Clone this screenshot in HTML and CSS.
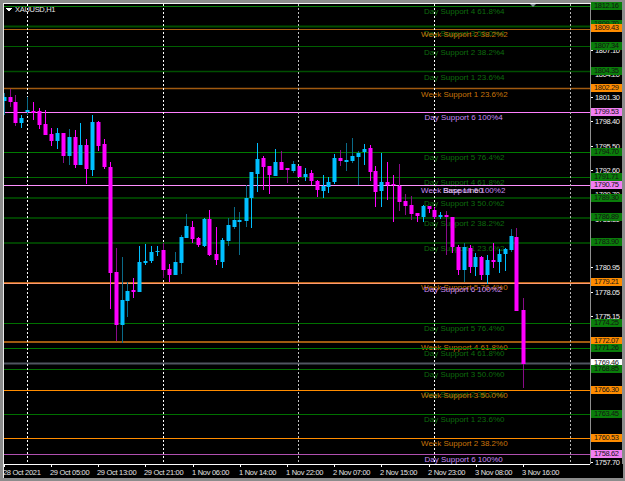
FILE: index.html
```html
<!DOCTYPE html>
<html lang="en">
<head>
  <meta charset="UTF-8" />
  <title>XAUUSD,H1</title>
  <link rel="stylesheet" href="styles.css">
</head>
<body>
  <div class="terminal">
    <div class="chart-window">
      <div class="plot" id="plot">
        <svg class="plot-svg" id="plot-svg" viewBox="4 4 586 460" width="586" height="460"></svg>
        <div class="symbol">
          <svg class="symbol-icon" viewBox="0 0 6 4" width="6" height="4"><path d="M0 0h6v1H0zM1 1h4v1H1zM2 2h2v1H2z" fill="#fff"/></svg>
          <span>XAUUSD,H1</span>
        </div>
        <svg class="one-click" viewBox="0 0 6 3" width="6" height="3"><path d="M0 0h6L3 3z" fill="#8a94a0"/></svg>
      </div>
      <div class="price-axis" id="price-axis"></div>
      <div class="time-axis" id="time-axis"></div>
      <div class="corner"></div>
    </div>
  </div>
  <script src="chart.js"></script>
</body>
</html>
```

FILE: styles.css
```css
* {
  box-sizing: border-box;
}

html, body {
  margin: 0;
  padding: 0;
  background: #8c8c8c;
}

.terminal {
  width: 625px;
  height: 481px;
  padding: 3px;
  overflow: hidden;
  background: #8c8c8c;
}

.chart-window {
  display: grid;
  grid-template-columns: 586px 33px;
  grid-template-rows: 460px 14px;
  border-left: 1px solid #e8e8e8;
  border-top: 1px solid #f4f4f4;
  background: #000;
  font-family: "Liberation Sans", Arial, sans-serif;
}

.plot {
  position: relative;
  overflow: hidden;
  background: #000;
}

.plot-svg {
  position: absolute;
  left: 0;
  top: 0;
  z-index: 2;
}

.symbol {
  position: absolute;
  left: 2px;
  top: 1px;
  z-index: 3;
  display: flex;
  align-items: center;
  gap: 3px;
  color: #e4e4e4;
  font-size: 7.5px;
  letter-spacing: -0.3px;
  line-height: 9px;
}

.one-click {
  position: absolute;
  left: 526px;
  top: 0;
  z-index: 3;
}

.level-label {
  position: absolute;
  z-index: 1;
  font-size: 8px;
  line-height: 9px;
  white-space: nowrap;
}

.level-label.day { color: #0d6b0d; }
.level-label.week { color: #c9750a; }
.level-label.pink { color: #c98cf5; }
.level-label.white { color: #e0c8e8; }

.price-axis {
  position: relative;
  z-index: 4;
  border-left: 1px solid #8f8f8f;
}

.price {
  position: absolute;
  left: 4px;
  color: #f0f0f0;
  font-size: 7.5px;
  letter-spacing: -0.35px;
  line-height: 9px;
}

.price-tick {
  position: absolute;
  left: 0;
  width: 2px;
  height: 1px;
  background: #fff;
}

.tag {
  position: absolute;
  left: 0;
  width: 31px;
  height: 8px;
  padding-left: 3px;
  color: #141414;
  font-size: 7.5px;
  letter-spacing: -0.35px;
  line-height: 8px;
}

.tag.green { background: #0a7d0a; }
.tag.orange { background: #ff8c00; }
.tag.pink { background: #f27ff2; }
.tag.white { background: #fff; }

.time-axis {
  position: relative;
  overflow: hidden;
  border-top: 1px solid #fff;
}

.time {
  position: absolute;
  top: 3px;
  color: #e4e4e4;
  font-size: 7.5px;
  letter-spacing: -0.3px;
  line-height: 9px;
  white-space: nowrap;
}

.time-tick {
  position: absolute;
  top: 0;
  width: 1px;
  height: 2px;
  background: #fff;
}

.corner {
  background: #000;
}
```

FILE: chart.js
```js
// horizontal levels: y, colour, width
const levels = [
  [6.5, '#0a7d0a', 1], [26.5, '#004f00', 2], [29.5, '#a8600f', 1],
  [46.5, '#005f00', 1], [71.5, '#004f00', 1.5], [88.5, '#a05a10', 1.5], [112.5, '#ff80ff', 1],
  [152.5, '#007a00', 1], [177.5, '#006a00', 1], [185.5, '#ff90ff', 1], [198, '#004000', 2],
  [218, '#004000', 2], [243, '#004000', 2], [282.5, '#b8651a', 1], [283.5, '#ff9a70', 1],
  [323.5, '#007000', 1], [342, '#a05a10', 2], [348.5, '#007a00', 1], [363.5, '#4f5560', 2],
  [369.5, '#007000', 1], [390.5, '#ff8c00', 1], [414.5, '#007000', 1], [438.5, '#ff8c00', 1],
  [454.5, '#b050b0', 1]
];

// dashed grid: x, colour
const grid = [[27.5, '#fff'], [163.5, '#fff'], [298.5, '#c0c0c0'], [434.5, '#fff'], [570.5, '#b8b8b8']];

// chart labels: class, x, centre y, text
const labels = [
  ['day', 424, 11, 'Day Support 4 61.8%4'],
  ['day', 424, 33, 'Day Support 3 50.0%4'],
  ['week', 421, 34, 'Week Support 2 38.2%2'],
  ['day', 424, 52, 'Day Support 2 38.2%4'],
  ['day', 424, 77, 'Day Support 1 23.6%4'],
  ['week', 421, 94, 'Week Support 1 23.6%2'],
  ['pink', 424.5, 117.5, 'Day Support 6 100%4'],
  ['day', 424, 157, 'Day Support 5 76.4%2'],
  ['day', 424, 182, 'Day Support 4 61.8%2'],
  ['pink', 421, 190, 'Week Support 6 100%2'],
  ['white', 443, 190, 'Base Line0'],
  ['day', 424, 203, 'Day Support 3 50.0%2'],
  ['day', 424, 223, 'Day Support 2 38.2%2'],
  ['day', 424, 248, 'Day Support 1 23.6%2'],
  ['week', 421, 287, 'Week Support 5 76.4%0'],
  ['pink', 424, 289, 'Day Support 6 100%2'],
  ['day', 424, 328, 'Day Support 5 76.4%0'],
  ['week', 421, 347, 'Week Support 4 61.8%0'],
  ['day', 424, 353, 'Day Support 4 61.8%0'],
  ['day', 424, 374, 'Day Support 3 50.0%0'],
  ['day', 424, 394, 'Day Support 2 38.2%0'],
  ['week', 421, 395, 'Week Support 3 50.0%0'],
  ['day', 424, 419, 'Day Support 1 23.6%0'],
  ['week', 421, 443, 'Week Support 2 38.2%0'],
  ['pink', 424.5, 459.5, 'Day Support 6 100%0']
];

// candles: x, colour (u = cyan, d = magenta), body top, body bottom, wick top, wick bottom, dim wick
const candles = [
  [4.5,'u',97,101,93,115,1], [10,'d',97,102,89,107,1], [15.7,'d',102,123,95,126,1], [21.6,'u',118,123,115,128],
  [27.5,'u',110,112,97,115,1], [33.3,'d',111,113,102,120], [39.2,'d',111,125,108,129], [45,'d',124,135,110,135],
  [51,'d',134,141,128,146], [57,'u',133,141,128,149], [63,'d',133,156,133,163,1], [69,'u',137,156,129,165,1],
  [75,'d',137,165,130,168], [80.5,'u',145,165,123,165], [86,'d',145,169,139,184], [92,'u',122,170,115,176],
  [98,'d',122,146,121,151], [104,'d',144,167,139,169], [110,'d',167,273,162,309], [116,'d',272,325,248,341,1],
  [122,'u',300,325,257,343,1], [127.5,'u',291,301,282,317,1], [133.6,'d',290,292,278,298], [139.7,'u',262,292,246,292],
  [145.7,'u',261,263,244,265], [151,'u',252,261,246,263], [157,'u',251,252,246,256], [163,'d',250,270,243,278,1],
  [169,'d',269,275,264,282], [175,'u',262,275,252,275,1], [181,'u',237,263,235,274,1], [186.5,'u',226,238,214,238,1],
  [192.5,'d',227,239,221,243], [198.7,'d',238,245,237,247], [204.5,'u',219,246,218,247], [209.8,'d',219,255,210,256],
  [216,'d',254,260,227,265], [222,'u',240,262,238,268], [228,'u',225,241,218,246,1], [234,'u',220,227,207,229,1],
  [239.5,'u',220,222,212,255,1], [246,'u',198,221,185,227,1], [251.5,'u',172,198,172,228], [257.5,'u',159,174,143,192],
  [263.5,'d',158,167,156,190], [269.5,'d',166,175,166,194], [275,'u',162,176,149,176], [281,'d',162,170,151,170,1],
  [287,'d',168,170,168,183,1], [293,'u',164,171,161,173,1], [299,'d',166,177,166,177], [305,'u',174,177,168,181],
  [311,'d',173,181,170,185], [317,'d',181,190,180,197], [323,'u',186,191,175,198], [328.5,'u',182,187,177,193],
  [334,'u',158,182,154,184], [340,'d',158,161,150,166,1], [346,'u',160,162,143,171,1], [352,'u',156,161,138,163,1],
  [358,'u',153,157,151,185,1], [364,'u',149,152,144,165], [370,'d',148,172,145,181], [375.5,'d',171,192,166,207],
  [381.5,'u',182,191,153,207], [387.5,'d',182,185,162,200], [393,'d',184,185,175,222], [399,'d',186,202,164,211,1],
  [405,'d',201,206,194,215,1], [411,'d',205,214,196,220,1], [417,'d',213,216,213,222], [423,'u',206,217,205,222],
  [429,'d',206,209,206,213], [434.5,'d',210,217,207,219], [440,'u',215,217,212,219], [446,'d',215,217,211,255,1],
  [452,'d',217,247,217,253], [458,'d',247,270,245,275], [464,'u',247,270,243,282,1], [470,'d',248,267,245,273],
  [475.7,'u',257,267,253,276], [481.7,'d',257,275,256,280], [487.5,'u',260,275,255,284], [493,'d',260,262,243,268],
  [499,'u',254,262,249,273], [505,'u',249,254,248,271], [511,'u',236,250,229,252,1], [516.5,'d',237,311,228,311,1],
  [523,'d',310,364,298,388,1]
];

// price axis: plain scale values, then the coloured tags on top
const prices = [
  [1810.00,24], [1807.10,50], [1804.20,74], [1801.30,97], [1798.40,121], [1795.50,146], [1792.60,170], [1789.70,194],
  [1786.80,219], [1783.90,243], [1780.95,267], [1778.05,292], [1775.15,316], [1772.25,340], [1769.35,365],
  [1766.45,389], [1763.55,414], [1760.65,438], [1757.70,462]
];
const tags = [
  ['green',1812.16,6], ['green',1809.70,24], ['orange',1809.43,28], ['green',1807.34,46], ['green',1804.35,71], ['orange',1802.29,88],
  ['pink',1799.53,112], ['green',1794.70,152], ['green',1791.71,177], ['pink',1790.75,185], ['green',1789.30,198],
  ['green',1786.89,217], ['green',1783.90,242], ['orange',1779.21,282], ['green',1774.25,323], ['orange',1772.07,341],
  ['green',1771.26,348], ['white',1769.46,363], ['green',1768.85,369], ['orange',1766.30,390], ['green',1763.45,414],
  ['orange',1760.53,438], ['pink',1758.62,454]
];

const times = [
  [3,'28 Oct 2021'], [50,'29 Oct 05:00'], [97,'29 Oct 13:00'], [144,'29 Oct 21:00'], [192,'1 Nov 06:00'], [239,'1 Nov 14:00'],
  [286,'1 Nov 22:00'], [333,'2 Nov 07:00'], [380,'2 Nov 15:00'], [428,'2 Nov 23:00'], [475,'3 Nov 08:00'], [522,'3 Nov 16:00']
];

const NS = 'http://www.w3.org/2000/svg';
const plot = document.getElementById('plot');
const svg = document.getElementById('plot-svg');
const priceAxis = document.getElementById('price-axis');
const timeAxis = document.getElementById('time-axis');

function shape(tag, attrs) {
  const el = document.createElementNS(NS, tag);
  Object.keys(attrs).forEach(k => el.setAttribute(k, attrs[k]));
  svg.appendChild(el);
}

function box(parent, cls, left, top, text) {
  const el = document.createElement('div');
  el.className = cls;
  if (left !== null) el.style.left = left + 'px';
  el.style.top = top + 'px';
  if (text) el.textContent = text;
  parent.appendChild(el);
}

levels.forEach(([y, color, w]) => {
  shape('line', { x1: 4, x2: 590, y1: y, y2: y, stroke: color, 'stroke-width': w });
});

grid.forEach(([x, color]) => {
  shape('line', { x1: x, x2: x, y1: 4, y2: 464, stroke: color, 'stroke-dasharray': '2 2' });
});

labels.forEach(([cls, x, y, text]) => {
  box(plot, 'level-label ' + cls, x - 4, y - 8.5, text);
});

candles.forEach(([x, dir, top, bottom, wickTop, wickBottom, dim]) => {
  const color = dir === 'u' ? '#00bfff' : '#ff00ff';
  const wick = !dim ? color : (dir === 'u' ? '#0a6a88' : '#8a0a8a');
  const cx = Math.round(x - 0.5) + 0.5;
  shape('line', { x1: cx, x2: cx, y1: wickTop, y2: wickBottom, stroke: wick });
  shape('rect', { x: cx - 2, y: top, width: 4, height: Math.max(bottom - top, 1), fill: color });
});

prices.forEach(([value, y]) => {
  box(priceAxis, 'price', null, y - 8.5, value.toFixed(2));
  box(priceAxis, 'price-tick', null, y - 4);
});

tags.forEach(([cls, value, y]) => {
  box(priceAxis, 'tag ' + cls, null, y - 8, value.toFixed(2));
});

times.forEach(([x, text]) => {
  box(timeAxis, 'time', x - 4, 3, text);
  box(timeAxis, 'time-tick', x - 3, 0);
});
```
